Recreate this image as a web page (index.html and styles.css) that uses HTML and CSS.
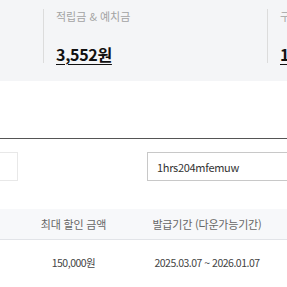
FILE: index.html
```html
<!DOCTYPE html>
<html lang="ko">
<head>
    <meta charset="UTF-8">
    <meta name="viewport" content="width=device-width, initial-scale=1.0">
    <title>쿠폰</title>
    <link rel="stylesheet" href="styles.css">
</head>
<body>
    <div class="summary">
        <div class="summary-list">
            <div class="summary-item">
                <p class="summary-label">적립금 &amp; 예치금</p>
                <p class="summary-value">3,552원</p>
            </div>
            <div class="summary-item">
                <p class="summary-label">구매금액</p>
                <p class="summary-value">1,250,000원</p>
            </div>
        </div>
    </div>

    <div class="section-title"></div>

    <div class="search-row">
        <input class="search-input search-left" type="text">
        <input class="search-input search-right" type="text" value="1hrs204mfemuw">
    </div>

    <div class="coupon-table">
        <div class="table-head">
            <div class="cell">최대 할인 금액</div>
            <div class="cell">발급기간 (다운가능기간)</div>
        </div>
        <div class="table-row">
            <div class="cell">150,000원</div>
            <div class="cell">2025.03.07 ~ 2026.01.07</div>
        </div>
    </div>
</body>
</html>
```

FILE: styles.css
```css
* {
    margin: 0;
    padding: 0;
    box-sizing: border-box;
}

body {
    width: 100%;
    overflow: hidden;
    font-family: "Noto Sans CJK KR", "Noto Sans", sans-serif;
    background-color: #fff;
    color: #333;
}

/* top summary */
.summary {
    height: 81px;
    background-color: #f4f5f7;
    padding-top: 9px;
    overflow: hidden;
}

.summary-list {
    display: flex;
    padding-left: 43px;
}

.summary-item {
    flex: 0 0 224px;
    height: 54px;
    border-left: 1px solid #dcdcdc;
    padding-left: 12px;
}

.summary-label {
    font-size: 11px;
    line-height: 14px;
    color: #a3a3a3;
}

.summary-value {
    display: inline-block;
    margin-top: 21px;
    font-size: 16px;
    line-height: 20px;
    font-weight: bold;
    letter-spacing: -0.3px;
    color: #111;
    text-decoration: underline;
    text-underline-offset: 3px;
}

.section-title {
    height: 58px;
    border-bottom: 1px solid #555;
}

/* search */
.search-row {
    display: flex;
    justify-content: space-between;
    padding-top: 13px;
    height: 70px;
}

.search-input {
    height: 29px;
    font-family: inherit;
    font-size: 11px;
    letter-spacing: -0.3px;
    color: #333;
    background: #fff;
    outline: none;
}

.search-left {
    width: 60px;
    margin-left: -42px;
    border: 1px solid #e8e8e8;
}

.search-right {
    width: 160px;
    margin-right: -20px;
    border: 1px solid #c8c8c8;
    padding-left: 9px;
}

/* table */
.table-head,
.table-row {
    display: grid;
    grid-template-columns: 133px 134px;
    padding-left: 7px;
    text-align: center;
}

.table-head {
    height: 31px;
    align-items: center;
    background-color: #f7f8fa;
    border-bottom: 1px solid #e2e4e8;
    font-size: 11px;
    letter-spacing: -0.2px;
    color: #666;
}

.table-row {
    padding-top: 15px;
    font-size: 10.5px;
    letter-spacing: -0.5px;
    color: #444;
}
```
